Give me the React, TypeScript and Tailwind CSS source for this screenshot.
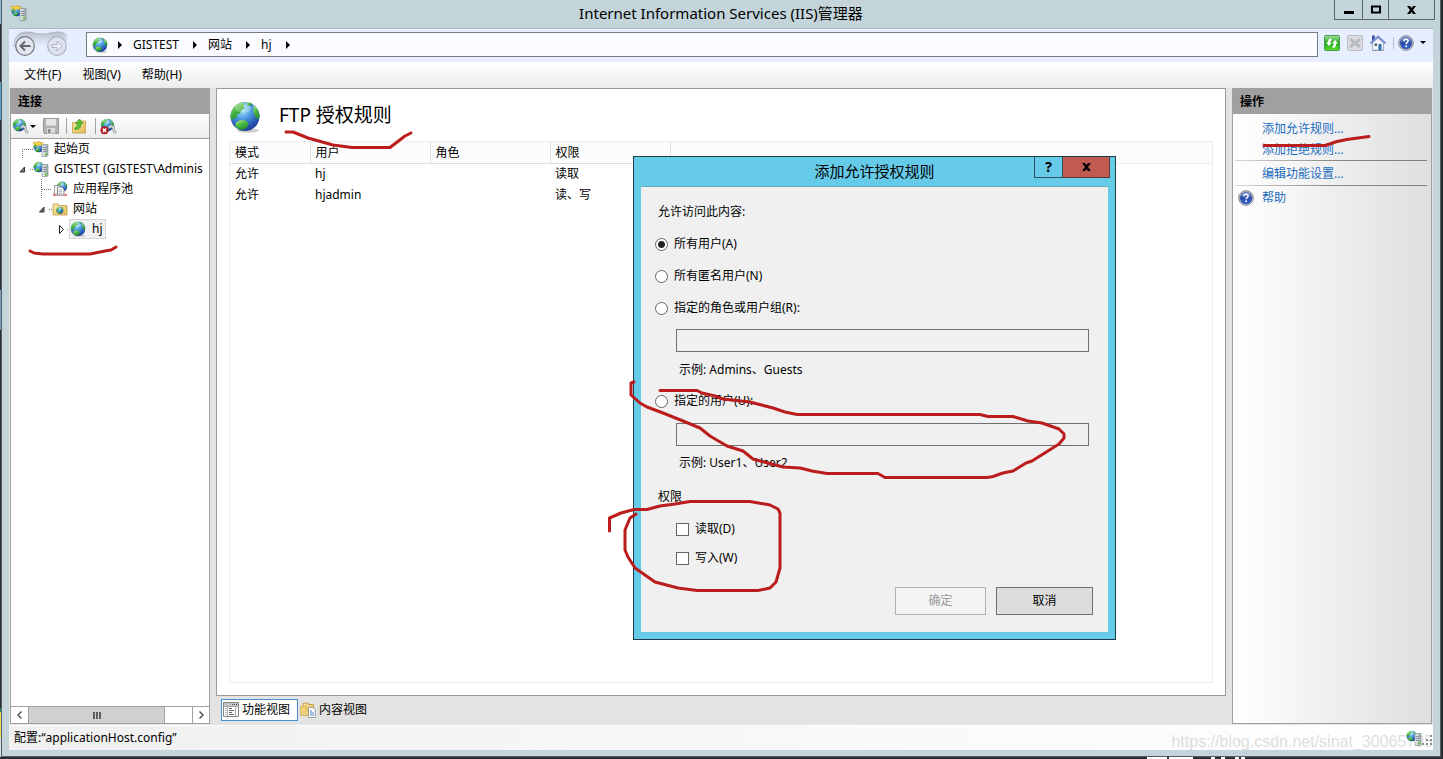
import { useState } from "react";
import type { ReactNode } from "react";

interface Rule {
  mode: string;
  user: string;
  role: string;
  permission: string;
}

const rules: Rule[] = [
  { mode: "允许", user: "hj", role: "", permission: "读取" },
  { mode: "允许", user: "hjadmin", role: "", permission: "读、写" },
];

const crumbs = ["GISTEST", "网站", "hj"];
const menus = ["文件(F)", "视图(V)", "帮助(H)"];

// gradients shared by all icons
function IconDefs() {
  return (
    <svg className="absolute size-0" aria-hidden="true">
      <defs>
        <radialGradient id="sea" cx="0.4" cy="0.25" r="0.8">
          <stop offset="0" stopColor="#b4eafc" />
          <stop offset="0.4" stopColor="#4d9ee0" />
          <stop offset="0.8" stopColor="#2450b0" />
          <stop offset="1" stopColor="#1a3a8c" />
        </radialGradient>
        <linearGradient id="land" x1="0" y1="0" x2="0.6" y2="1">
          <stop offset="0" stopColor="#c2f090" />
          <stop offset="0.5" stopColor="#4cba40" />
          <stop offset="1" stopColor="#228a30" />
        </linearGradient>
        <linearGradient id="folder" x1="0" y1="0" x2="1" y2="1">
          <stop offset="0" stopColor="#fbeaa8" />
          <stop offset="1" stopColor="#e2ba55" />
        </linearGradient>
        <linearGradient id="metal" x1="0" y1="0" x2="1" y2="0">
          <stop offset="0" stopColor="#f1f4f5" />
          <stop offset="1" stopColor="#9aa7ac" />
        </linearGradient>
        <linearGradient id="lime" x1="0" y1="0" x2="0" y2="1">
          <stop offset="0" stopColor="#a2e498" />
          <stop offset="0.5" stopColor="#1fa51f" />
          <stop offset="1" stopColor="#5fe02f" />
        </linearGradient>
        <linearGradient id="navy" x1="0" y1="0" x2="0" y2="1">
          <stop offset="0" stopColor="#8fa9ea" />
          <stop offset="0.5" stopColor="#2c4ca6" />
          <stop offset="1" stopColor="#2f62d8" />
        </linearGradient>
        <linearGradient id="pod" x1="0" y1="0" x2="0" y2="1">
          <stop offset="0" stopColor="#b9bfcc" />
          <stop offset="0.5" stopColor="#d3d8e6" />
          <stop offset="1" stopColor="#e6eeff" />
        </linearGradient>
      </defs>
    </svg>
  );
}

function GlobeShape() {
  return (
    <g>
      <circle cx="16" cy="15.5" r="14.5" fill="url(#sea)" />
      <path
        d="M2.6 10.5C4.500 6 8 2.600 12 1.600l3.600 1.200-1.400 2.400 1.600 2.200-3.200 1.800-1.200 3-3.400 1.200-.6 3-2.600 1.600-3 .4c-.5-2.600-.2-5.400.8-7.900z"
        fill="url(#land)"
      />
      <path d="M18 1.300c2 .1 3.800.6 5.400 1.500l-1.200 1.800-3 .2-1.600-1.300z" fill="url(#land)" />
      <path
        d="M25.200 4.400c3.200 2.600 5.300 6.600 5.300 11l-1.600 3.200-2.600-2.400-.4-3.200-2-1.600 1-3.200-.8-2z"
        fill="url(#land)"
      />
      <path d="M7 21.600l4-2.400 5.400.3 3.200 2.700-.8 3.600-4 3-5.300-.4-3.200-3.400z" fill="url(#land)" />
      <ellipse cx="14" cy="7" rx="8" ry="5" fill="#fff" opacity="0.25" />
    </g>
  );
}

function Globe({ className = "size-4" }: { className?: string }) {
  return (
    <svg viewBox="0 0 32 32" className={`shrink-0 ${className}`} aria-hidden="true">
      <ellipse cx="19" cy="29.5" rx="11" ry="2.200" fill="#000" opacity="0.2" />
      <GlobeShape />
    </svg>
  );
}

function ServerIcon({ star = false }: { star?: boolean }) {
  return (
    <svg viewBox="0 0 16 16" className="size-4 shrink-0" aria-hidden="true">
      <g transform="translate(0 .5) scale(.36)">
        <GlobeShape />
      </g>
      {star && (
        <path
          d="M0 .8l3.400.8L6.400 0l.8 1.800 2.600-.4 1.400 3-1.600-.8-1.800 1.200-2.200-1-1 2.200-1.600-2.400L1 4.400z"
          fill="#f4d24c"
          stroke="#b98f22"
          strokeWidth=".4"
        />
      )}
      <path d="M9 4.500l1-1h5v11l-1 1H9z" fill="url(#metal)" stroke="#7b868b" strokeWidth=".6" />
      <path d="M10 6.500h3.500M10 8.500h3.500M10 10.500h3.500" stroke="#6a777e" strokeWidth=".7" />
      <path d="M12 12.500h2v2h-2z" fill="#62d12c" />
    </svg>
  );
}

function ConnectIcon({ stop = false }: { stop?: boolean }) {
  return (
    <svg viewBox="0 0 17 17" className="size-[17px] shrink-0" aria-hidden="true">
      <g transform="translate(.2 .2) scale(.44)">
        <GlobeShape />
      </g>
      <path d="M9 9.800l2.200-1.800 2.300 1.800.2 2.600 2.300 2.700" fill="none" stroke="#8b989e" strokeWidth="2.800" />
      <path d="M9 9.800l2.200-1.800 2.300 1.800.2 2.600 2.300 2.700" fill="none" stroke="#dfe6e8" strokeWidth="1.200" />
      {stop && (
        <>
          <circle cx="4.500" cy="12.300" r="4" fill="#b3191c" />
          <path d="M2.800 10.600l3.400 3.400m0-3.400l-3.400 3.400" stroke="#fff" strokeWidth="1.400" />
        </>
      )}
    </svg>
  );
}

function SaveIcon() {
  return (
    <svg viewBox="0 0 16 16" className="size-4 shrink-0" aria-hidden="true">
      <path d="M.5.5h15v15h-14l-1-1z" fill="#b2b2b2" stroke="#999" />
      <path d="M3 1h10v6.500H3z" fill="#e6e6e6" />
      <path d="M4 10h8v5.500H4z" fill="#dadada" />
      <path d="M5 11h2.500v4H5z" fill="#8a8a8a" />
    </svg>
  );
}

function UpFolderIcon() {
  return (
    <svg viewBox="0 0 16 16" className="size-4 shrink-0" aria-hidden="true">
      <path d="M1.500 4.500h4L7 3h7.500v12h-13z" fill="url(#folder)" stroke="#c09b46" strokeWidth=".8" />
      <path
        d="M3.500 10c2.200-.8 3-2.400 3-4.500H4.300L8.500 1l3.800 4.500H10c.2 4-2 6-6 6z"
        fill="#5bc236"
        stroke="#2f8a1c"
        strokeWidth=".6"
      />
    </svg>
  );
}

function PoolIcon() {
  return (
    <svg viewBox="0 0 16 16" className="size-4 shrink-0" aria-hidden="true">
      <g transform="translate(4.500 .2) scale(.35)">
        <GlobeShape />
      </g>
      <path d="M.8 12c2 3.500 11.900 4 14.400 0l-.8 3H1.600z" fill="#d8504a" />
      <path d="M2.500 4.500h6v8.500h-6z" fill="#f8f8f8" stroke="#858585" strokeWidth=".8" />
      <path d="M5.500 6h4l2.500 2.300V14H5.500z" fill="#fff" stroke="#6d6d6d" strokeWidth=".8" />
      <path d="M6.700 9h3.500M6.700 10.700h3.500M6.700 12.300h3.500" stroke="#8797a8" strokeWidth=".7" />
    </svg>
  );
}

function SitesIcon() {
  return (
    <svg viewBox="0 0 16 16" className="size-4 shrink-0" aria-hidden="true">
      <path d="M1 3h5l1 1.500h8V14H1z" fill="url(#folder)" stroke="#c09b46" strokeWidth=".8" />
      <g transform="translate(4 5.500) scale(.24)">
        <GlobeShape />
      </g>
    </svg>
  );
}

function HelpIcon() {
  return (
    <svg viewBox="0 0 16 16" className="size-4 shrink-0" aria-hidden="true">
      <circle cx="8" cy="8" r="7.300" fill="#d5d8de" stroke="#7d828c" strokeWidth="1" />
      <circle cx="8" cy="8" r="5.900" fill="url(#navy)" stroke="#1e3780" strokeWidth=".5" />
      <path
        d="M5.900 6.300c0-2.700 4.200-2.700 4.200-.2 0 1.500-2 1.500-2 3.200"
        fill="none"
        stroke="#fff"
        strokeWidth="1.500"
      />
      <circle cx="8.100" cy="11.300" r=".95" fill="#fff" />
    </svg>
  );
}

function RefreshIcon() {
  return (
    <svg viewBox="0 0 16 16" className="size-4 shrink-0" aria-hidden="true">
      <rect x=".5" y=".5" width="15" height="15" rx="1" fill="url(#lime)" stroke="#4a9a50" />
      <path
        d="M7.500 3.500C5 3.500 3.800 5 3.800 7.500H2l3 3.500 3-3.500H6.200c0-1.200.3-1.700 1.300-1.700z"
        fill="#fff"
      />
      <path
        d="M8.500 13c2.500 0 3.700-1.500 3.700-4.500H14L11 5 8 8.500h1.800c0 1.500-.3 2.200-1.300 2.200z"
        fill="#fff"
      />
    </svg>
  );
}

function StopIcon() {
  return (
    <svg viewBox="0 0 16 16" className="size-4 shrink-0" aria-hidden="true">
      <rect x=".5" y=".5" width="15" height="15" rx="1.500" fill="#dcdde1" stroke="#bcbec4" />
      <path d="M3 4l10 8M13 4L3 12" stroke="#a6a9b0" strokeWidth="2.600" />
      <path d="M3 4l10 8M13 4L3 12" stroke="#d0d2d7" strokeWidth="1" />
    </svg>
  );
}

function HomeIcon() {
  return (
    <svg viewBox="0 0 16 16" className="size-4 shrink-0" aria-hidden="true">
      <path d="M2 .5h2.800V6H2z" fill="#3a52a8" />
      <path d="M2.500 7.500L8 3l5.500 4.500v8h-11z" fill="#f2f5fb" stroke="#8894b4" strokeWidth=".7" />
      <path d="M.5 8.500L8 1.500l7.500 7" fill="none" stroke="#7a8ed2" strokeWidth="2" />
      <path d="M8.500 9h3v6.300h-3z" fill="#2f6fb0" />
      <path d="M4.500 8.500H7V11H4.500z" fill="#566" />
      <path d="M2.500 15.300h11" stroke="#7a8fa8" strokeWidth=".9" />
    </svg>
  );
}

function FeaturesIcon() {
  return (
    <svg viewBox="0 0 16 16" className="size-4 shrink-0" aria-hidden="true">
      <path d="M.5.5h15v14H.5z" fill="#fff" stroke="#868686" />
      <path d="M1 1h14v3H1z" fill="#c2c5c9" />
      <path d="M9 2.500h1M11 2.500h1M13 2.500h1" stroke="#445" />
      <path d="M1 4.500h14M4.500 5v9M12.500 5v9" stroke="#aaa" />
      <path d="M2 6.500h1.500M2 8.500h1.500M2 10.500h1.500M2 12.500h1.500" stroke="#aaa" />
      <path d="M6 6.500h3M6 8.500h5M6 10.500h3M6 12.500h5" stroke="#666" />
    </svg>
  );
}

function ContentIcon() {
  return (
    <svg viewBox="0 0 16 16" className="size-4 shrink-0" aria-hidden="true">
      <path d="M3 1.500L8 .8l.5 1.700h5V9l-3 4H2z" fill="url(#folder)" stroke="#b8923a" strokeWidth=".8" />
      <path d="M.5 4.500L6 4l3 9.500H.7z" fill="#efd07a" stroke="#c59f45" strokeWidth=".6" />
      <path d="M8.500 5.500H13l2.300 2.300v7.700H8.500z" fill="#fff" stroke="#8b8b8b" strokeWidth=".8" />
      <path d="M10 9h2M10 11h4M10 13h4" stroke="#4a7ec0" />
    </svg>
  );
}

function NavPod() {
  return (
    <svg viewBox="0 0 56 28" className="h-7 w-14" aria-hidden="true">
      <path
        d="M1 15C1 6 6 1 13 1c8 0 9 2 16 2S40 1 45 1c5 0 9 3 9 8v6z"
        fill="url(#pod)"
      />
      <path d="M1 16C1 6 6 1 13 1c8 0 9 2 16 2S40 1 45 1c4 0 7 1 9 4" fill="none" stroke="#a3aab8" strokeWidth=".8" />
      <circle cx="12" cy="15" r="9.300" fill="#e3e6ee" stroke="#70757e" strokeWidth="1.200" />
      <path d="M17.500 15H8M12 10.500L7.500 15l4.500 4.500" fill="none" stroke="#62666e" strokeWidth="2" />
      <circle cx="44" cy="15" r="9.300" fill="#dde2ee" stroke="#aeb4c0" strokeWidth="1.200" />
      <path
        d="M39 13.500h5V10l5.500 5-5.500 5v-3.500h-5z"
        fill="#e8ecf6"
        stroke="#b0b6c2"
        strokeWidth="1"
      />
    </svg>
  );
}

function ArrowRight() {
  return (
    <svg viewBox="0 0 4 8" className="h-2 w-1 shrink-0" aria-hidden="true">
      <path d="M0 0l4 4-4 4z" fill="#000" />
    </svg>
  );
}

function ArrowDown() {
  return (
    <svg viewBox="0 0 6 3" className="h-[3px] w-1.5 shrink-0" aria-hidden="true">
      <path d="M0 0h6L3 3z" fill="#000" />
    </svg>
  );
}

function TitleBar() {
  return (
    <header className="grid h-7 grid-cols-[1fr_auto_1fr]">
      <div className="px-[9px] pt-[5px]">
        <ServerIcon star />
      </div>
      <h1 className="text-[15px] leading-[27px]">Internet Information Services (IIS)管理器</h1>
      <div className="mr-[5px] flex h-5 justify-end">
        <button aria-label="最小化" className="flex w-[29px] items-center justify-center border border-t-0 border-[#59676d]">
          <svg viewBox="0 0 10 9" className="h-[9px] w-2.5">
            <path d="M0 6h10v3H0z" />
          </svg>
        </button>
        <button aria-label="最大化" className="flex w-[26px] items-center justify-center border-r border-b border-[#59676d]">
          <svg viewBox="0 0 10 9" className="h-[9px] w-2.5">
            <path d="M1 1.500h8v6H1z" fill="none" stroke="#000" strokeWidth="2" />
          </svg>
        </button>
        <button aria-label="关闭" className="flex w-[46px] items-center justify-center border-r border-b border-[#59676d]">
          <CloseMark />
        </button>
      </div>
    </header>
  );
}

function CloseMark() {
  return (
    <svg viewBox="0 0 9 8" className="h-2 w-[9px]" aria-hidden="true">
      <path d="M0 0h3l1.500 2L6 0h3L6 4l3 4H6L4.500 6 3 8H0l3-4z" fill="#000" />
    </svg>
  );
}

function NavBar() {
  return (
    <div className="flex h-[34px] items-center border-t border-[#a9b9c4] bg-[#e6eeff] pr-[7px] pb-0.5">
      <button aria-label="后退和前进" className="ml-1">
        <NavPod />
      </button>
      <nav className="ml-[17px] flex h-[25px] min-w-0 flex-1 items-center border border-[#767b86] bg-[#fafcff] pl-[5px]">
        <Globe />
        <div className="ml-2.5 flex items-center gap-[11px]">
          <ArrowRight />
          {crumbs.map((crumb) => (
            <div key={crumb} className="flex items-center gap-[14px]">
              <a href="#" className="leading-5">{crumb}</a>
              <ArrowRight />
            </div>
          ))}
        </div>
      </nav>
      <div className="ml-1.5 flex items-center gap-[7px] pb-1">
        <button aria-label="刷新"><RefreshIcon /></button>
        <button aria-label="停止" disabled><StopIcon /></button>
        <button aria-label="主页"><HomeIcon /></button>
        <button aria-label="帮助" className="flex items-center gap-1">
          <span className="h-3 w-px bg-[#b9bdc8]" />
          <HelpIcon />
          <span className="ml-0.5"><ArrowDown /></span>
        </button>
      </div>
    </div>
  );
}

function MenuBar() {
  return (
    <div className="flex h-[26px] items-center gap-[21px] bg-linear-to-b from-white to-[#ececec] pl-[15px]">
      {menus.map((menu) => (
        <button key={menu}>{menu}</button>
      ))}
    </div>
  );
}

function PanelHeader({ children }: { children: ReactNode }) {
  return <h2 className="h-[26px] bg-[#a0a0a0] px-[7px] leading-7 font-bold">{children}</h2>;
}

const dots = { stroke: "#777", strokeDasharray: "1 1" };

function ConnectionTree() {
  return (
    <ul className="flex-1 bg-white whitespace-nowrap">
      <li className="flex h-5 items-center">
        <svg viewBox="0 0 22 20" className="h-5 w-[22px] shrink-0">
          <path d="M11.500 10v10M11 10.500h11" {...dots} />
        </svg>
        <ServerIcon star />
        <span className="ml-[5px]">起始页</span>
      </li>
      <li className="flex h-5 items-center">
        <svg viewBox="0 0 22 20" className="h-5 w-[22px] shrink-0">
          <path d="M13.500 8v5h-4.500z" fill="#777" stroke="#333" />
          <path d="M19 10.500h3" {...dots} />
        </svg>
        <ServerIcon />
        <span className="ml-[5px]">GISTEST (GISTEST\Adminis</span>
      </li>
      <li className="flex h-5 items-center">
        <svg viewBox="0 0 41 20" className="h-5 w-[41px] shrink-0">
          <path d="M30.500 0v20M31 10.500h10" {...dots} />
        </svg>
        <PoolIcon />
        <span className="ml-[5px]">应用程序池</span>
      </li>
      <li className="flex h-5 items-center">
        <svg viewBox="0 0 41 20" className="h-5 w-[41px] shrink-0">
          <path d="M33 8v5h-4.500z" fill="#777" stroke="#333" />
          <path d="M38 10.500h3" {...dots} />
        </svg>
        <SitesIcon />
        <span className="ml-[5px]">网站</span>
      </li>
      <li className="flex h-5 items-center">
        <svg viewBox="0 0 58 20" className="h-5 w-[58px] shrink-0">
          <path d="M48.500 6.500v8l4-4z" fill="#fff" stroke="#222" />
          <path d="M56 10.500h2" {...dots} />
        </svg>
        <span className="flex h-5 items-center gap-1.5 border border-[#d5d5d5] bg-[#f0f0f0] pr-0.5">
          <Globe />
          hj
        </span>
      </li>
    </ul>
  );
}

function Scrollbar() {
  return (
    <div className="flex h-[17px] border-t border-[#a0a0a0] bg-white">
      <button aria-label="向左滚动" className="flex w-[17px] items-center justify-center">
        <svg viewBox="0 0 5 8" className="h-2 w-[5px]">
          <path d="M4.500.5L1 4l3.500 3.500" fill="none" stroke="#555" strokeWidth="1.500" />
        </svg>
      </button>
      <div className="flex w-[137px] items-center justify-center gap-px border-x border-[#a0a0a0] bg-[#d0d0d0]">
        <span className="h-[7px] w-0.5 bg-[#606060]" />
        <span className="h-[7px] w-0.5 bg-[#606060]" />
        <span className="h-[7px] w-0.5 bg-[#606060]" />
      </div>
      <div className="flex-1 bg-white" />
      <button aria-label="向右滚动" className="flex w-[17px] items-center justify-center border-l border-[#a0a0a0]">
        <svg viewBox="0 0 5 8" className="h-2 w-[5px]">
          <path d="M.5.5L4 4 .5 7.500" fill="none" stroke="#555" strokeWidth="1.500" />
        </svg>
      </button>
    </div>
  );
}

function ConnectionsPanel() {
  return (
    <section className="flex w-[200px] shrink-0 flex-col border border-t-0 border-[#a0a0a0]">
      <PanelHeader>连接</PanelHeader>
      <div className="flex h-[25px] items-center border-b border-[#a0a0a0] bg-linear-to-b from-white to-[#ececec] pl-px">
        <button aria-label="创建新连接" className="flex items-center gap-px">
          <ConnectIcon />
          <ArrowDown />
        </button>
        <button aria-label="保存连接" disabled className="ml-[7px]"><SaveIcon /></button>
        <span className="mr-1 ml-[7px] h-4 w-px bg-[#a0a0a0]" />
        <button aria-label="向上"><UpFolderIcon /></button>
        <span className="mr-1 ml-2 h-4 w-px bg-[#a0a0a0]" />
        <button aria-label="删除连接"><ConnectIcon stop /></button>
      </div>
      <ConnectionTree />
      <Scrollbar />
    </section>
  );
}

function RulesPage() {
  return (
    <section className="flex flex-1 flex-col border border-[#9a9a9a] bg-white px-3 pt-2 pb-3">
      <div className="flex h-[44px] items-start gap-[18px]">
        <Globe className="mt-1 size-8" />
        <h2 className="text-[19px] leading-9">FTP 授权规则</h2>
      </div>
      <div className="flex-1 border border-[#ececec]">
        <table className="w-full table-fixed text-left">
          <colgroup>
            <col className="w-20" />
            <col className="w-[120px]" />
            <col className="w-[120px]" />
            <col className="w-[120px]" />
            <col />
          </colgroup>
          <thead>
            <tr className="h-[21px] bg-[#fcfcfc]">
              {["模式", "用户", "角色", "权限"].map((name) => (
                <th key={name} className="border-r border-b border-[#dedede] px-[5px] pt-0.5 pb-0 font-normal">{name}</th>
              ))}
              <td className="border-b border-[#ececec] p-0" />
            </tr>
          </thead>
          <tbody>
            {rules.map((rule) => (
              <tr key={rule.user} className="h-[21px]">
                <td className="px-[5px] py-0">{rule.mode}</td>
                <td className="px-[5px] py-0">{rule.user}</td>
                <td className="px-[5px] py-0">{rule.role}</td>
                <td className="px-[5px] py-0">{rule.permission}</td>
                <td className="p-0" />
              </tr>
            ))}
          </tbody>
        </table>
      </div>
    </section>
  );
}

function ViewTabs() {
  return (
    <div className="flex h-7 items-center gap-px px-[5px]">
      <button className="flex h-[22px] w-[77px] items-center gap-[3px] border border-[#4a90d0] bg-white pl-px">
        <FeaturesIcon />
        功能视图
      </button>
      <button className="flex h-[22px] items-center gap-[3px] px-px">
        <ContentIcon />
        内容视图
      </button>
    </div>
  );
}

function ActionsPanel() {
  const divider = <div className="mr-1 ml-0.5 h-px bg-linear-to-r from-[#d8d8d8] via-[#8a8a8a] to-[#808080]" />;
  return (
    <section className="w-[200px] shrink-0 border border-t-0 border-[#a0a0a0] bg-linear-to-r from-white to-[#dfdfdf] text-[#1a6cc0]">
      <div className="text-black">
        <PanelHeader>操作</PanelHeader>
      </div>
      <div className="pt-1 pl-[29px]">
        <a href="#" className="block h-[21px] leading-[21px]">添加允许规则...</a>
        <a href="#" className="block h-[21px] leading-[21px]">添加拒绝规则...</a>
      </div>
      {divider}
      <a href="#" className="block h-6 pl-[29px] leading-[26px]">编辑功能设置...</a>
      {divider}
      <a href="#" className="flex h-6 items-center gap-2 pl-[5px]">
        <HelpIcon />
        <span className="leading-6">帮助</span>
      </a>
    </section>
  );
}

function StatusBar() {
  return (
    <footer className="flex h-[25px] items-center justify-between border-t border-white bg-linear-to-r from-[#f0f0f0] to-white pl-[5px]">
      <span>配置:“applicationHost.config”</span>
      <div className="relative flex h-full items-center">
        <span className="pt-2 font-['Liberation_Sans',sans-serif] text-base leading-4 text-[#dedede]">
          https://blog.csdn.net/sinat_30065705
        </span>
        <span className="absolute right-0 flex items-end">
          <ServerIcon />
          <svg viewBox="0 0 11 11" className="size-[11px]">
            <path d="M8 0h2v2H8zM4 4h2v2H4zM8 4h2v2H8zM0 8h2v2H0zM4 8h2v2H4zM8 8h2v2H8z" fill="#8e8e8e" />
          </svg>
        </span>
      </div>
    </footer>
  );
}

interface ScopeRadioProps {
  value: string;
  label: string;
  scope: string;
  onChange: (value: string) => void;
}

function ScopeRadio({ value, label, scope, onChange }: ScopeRadioProps) {
  return (
    <label className="flex h-5 items-center gap-1.5">
      <input
        type="radio"
        name="scope"
        value={value}
        checked={scope === value}
        onChange={() => onChange(value)}
        className="size-[13px] appearance-none rounded-full border border-[#666] bg-white checked:bg-[radial-gradient(circle,#222_3px,#fff_4px)]"
      />
      {label}
    </label>
  );
}

function PermissionCheck({ label }: { label: string }) {
  return (
    <label className="flex h-5 items-center gap-1.5">
      <input
        type="checkbox"
        className="size-[13px] appearance-none border border-[#666] bg-white checked:bg-[#444]"
      />
      {label}
    </label>
  );
}

function AllowRuleDialog() {
  const [scope, setScope] = useState("all");

  return (
    <div
      role="dialog"
      aria-label="添加允许授权规则"
      className="absolute top-[156px] left-[633px] w-[483px] border border-[#1d3a47] bg-[#66cae9] px-[7px] pb-[7px]"
    >
      <div className="grid h-[29px] grid-cols-[1fr_auto_1fr]">
        <h2 className="col-start-2 text-[15px] leading-7">添加允许授权规则</h2>
        <div className="flex h-[21px] justify-end">
          <button aria-label="帮助" className="w-[29px] border border-t-0 border-[#31505e] text-sm leading-5 font-bold">?</button>
          <button aria-label="关闭" className="-mr-0.5 flex w-[47px] items-center justify-center border-r border-b border-[#5d3a3a] bg-[#c15a50]">
            <CloseMark />
          </button>
        </div>
      </div>
      <form className="flex h-[446px] flex-col border-t border-[#6faabd] bg-[#f0f0f0] px-3.5 pt-[15px]">
        <p className="pl-[3px] leading-5">允许访问此内容:</p>
        <div className="mt-3 flex flex-col gap-3">
          <ScopeRadio value="all" label="所有用户(A)" scope={scope} onChange={setScope} />
          <ScopeRadio value="anonymous" label="所有匿名用户(N)" scope={scope} onChange={setScope} />
          <ScopeRadio value="roles" label="指定的角色或用户组(R):" scope={scope} onChange={setScope} />
        </div>
        <input
          aria-label="指定的角色或用户组"
          disabled={scope !== "roles"}
          className="mt-[11px] mr-[5px] ml-[21px] h-[23px] border border-[#707070] px-1"
        />
        <p className="mt-2 mb-[11px] pl-6 leading-5">示例: Admins、Guests</p>
        <ScopeRadio value="users" label="指定的用户(U):" scope={scope} onChange={setScope} />
        <input
          aria-label="指定的用户"
          disabled={scope !== "users"}
          className="mt-3 mr-[5px] ml-[21px] h-[23px] border border-[#707070] px-1"
        />
        <p className="mt-[7px] pl-6 leading-5">示例: User1、User2</p>
        <fieldset className="mt-[14px]">
          <legend className="pl-[3px] leading-5">权限</legend>
          <div className="mt-3 flex flex-col gap-[9px] pl-[21px]">
            <PermissionCheck label="读取(D)" />
            <PermissionCheck label="写入(W)" />
          </div>
        </fieldset>
        <div className="mt-auto mb-[17px] flex justify-end gap-2.5 pr-px">
          <button type="button" disabled className="h-7 w-[91px] border border-[#adb2b5] bg-[#f4f4f4] text-[#9a9a9a]">确定</button>
          <button type="button" className="h-7 w-[97px] border border-[#707070] bg-[#dddddd]">取消</button>
        </div>
      </form>
    </div>
  );
}

// red pen marks over the window
function PenMarks() {
  return (
    <svg
      viewBox="0 0 1443 759"
      className="pointer-events-none absolute top-0 left-0 h-[759px] w-[1443px]"
      fill="none"
      stroke="#bb1c1c"
      strokeWidth="3"
      strokeLinecap="round"
      strokeLinejoin="round"
      aria-hidden="true"
    >
      <path d="M286 132h7l15 6 25 7 19 2.500h38l15-11.500 6-3" />
      <path d="M30 251l4 2 9 1h47l15-3 6-1 5-3" />
      <path d="M1264 145.500h61l12-4 10-2 22-3" />
      <path d="M660 390.500H697L702 393L715 396L723 399L750 402L773 408L785 412L797 414.500H980L988 416.500H1013L1028 421L1042 423L1059 429L1064 434V438L1059 444L1032 461L1026 463L1013 471L1003 473L993 476.500L987 477.500H885L878 473.500H827L812 471L800 468L783 467L753 459L743 451L727 446L710 436L700 428L683 421L663 413L647 407L640 403L631 395V383L634 382" />
      <path d="M609.500 531V518L621 513L634 509.500H647L660 506L675 504L690 501.500H750L770 505L778 509L780 513V568L776 582L770 588L758 590.500H697L678 588L655 582L635 568L628 557L625 550V530L630 518L636 514" />
    </svg>
  );
}

export default function App() {
  return (
    <div className="relative flex min-h-screen flex-col overflow-hidden bg-[#2b2c31] font-['Noto_Sans','Noto_Sans_CJK_SC',sans-serif] text-xs text-black">
      <IconDefs />
      <div className="flex flex-1">
        <div className="w-px bg-[linear-gradient(#8fb4d8_0_24px,#2b2c31_24px_82px,#5da3cf_82px_120px,#2b2c31_120px_290px,#7d9fb8_290px_330px,#2b2c31_330px_708px,#2c8a52_708px_712px,#e8df5a_712px_738px,#d8e0e4_738px)]" />
        <main className="mr-0.5 flex min-w-0 flex-1 flex-col border border-t-0 border-[#4f5f68] bg-[#c3d5db]">
          <TitleBar />
          <div className="mx-[7px] mb-1.5 flex flex-1 flex-col">
            <NavBar />
            <MenuBar />
            <div className="flex flex-1 bg-[#e3e3e3] px-px pb-px">
              <ConnectionsPanel />
              <div className="mx-1.5 flex min-w-0 flex-1 flex-col">
                <RulesPage />
                <ViewTabs />
              </div>
              <ActionsPanel />
            </div>
            <StatusBar />
          </div>
        </main>
      </div>
      <div className="flex h-0.5 justify-end gap-0.5 pr-[198px]">
        <span className="w-5 bg-white" />
        <span className="w-6 bg-white" />
        <span className="ml-4 w-1 bg-white" />
        <span className="ml-1 w-1 bg-white" />
        <span className="ml-2 w-1 bg-white" />
        <span className="w-1 bg-white" />
      </div>
      <AllowRuleDialog />
      <PenMarks />
    </div>
  );
}
